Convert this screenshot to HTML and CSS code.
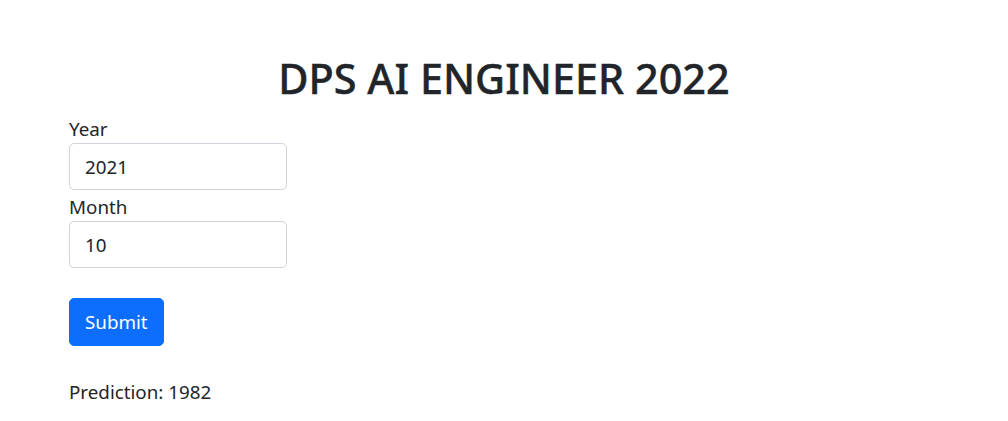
FILE: index.html
```html
<!DOCTYPE html>
<html lang="en">
<head>
<meta charset="utf-8">
<title>DPS AI Engineer 2022</title>
<link rel="stylesheet" href="styles.css">
</head>
<body>
<main class="container">
  <h1 class="title">DPS AI ENGINEER 2022</h1>
  <form class="form">
    <label class="label" for="year">Year</label>
    <input class="control" id="year" type="text" value="2021">
    <label class="label" for="month">Month</label>
    <input class="control" id="month" type="text" value="10">
    <button class="btn" type="button">Submit</button>
  </form>
  <p class="result">Prediction: 1982</p>
</main>
</body>
</html>
```

FILE: styles.css
```css
* { box-sizing: border-box; }
html, body { margin: 0; padding: 0; background: #fff; }
body {
  font-family: "Noto Sans", "Open Sans", sans-serif;
  font-size: 18.8px;
  line-height: 30px;
  color: #212529;
}
.container {
  padding: 48px 69px 0 69px;
}
.title {
  margin: 0;
  text-align: center;
  font-size: 41.4px;
  font-weight: 500;
  line-height: 61px;
  -webkit-text-stroke: 0.4px #212529;
}
.form {
  display: flex;
  flex-direction: column;
  align-items: flex-start;
  margin-top: 4px;
}
.label {
  display: block;
  height: 30px;
  padding-top: 2px;
  line-height: 28px;
}
.control {
  width: 218px;
  height: 47px;
  padding: 7px 15px;
  font: inherit;
  color: #212529;
  border: 1px solid #ced4da;
  border-radius: 5px;
  background: #fff;
  margin-bottom: 1px;
}
.btn {
  margin-top: 29px;
  height: 48px;
  padding: 0 15px;
  font: inherit;
  color: #fff;
  background: #0d6efd;
  border: 1px solid #0d6efd;
  border-radius: 5px;
}
.result {
  margin: 30px 0 0 0;
  line-height: 32px;
}
```
